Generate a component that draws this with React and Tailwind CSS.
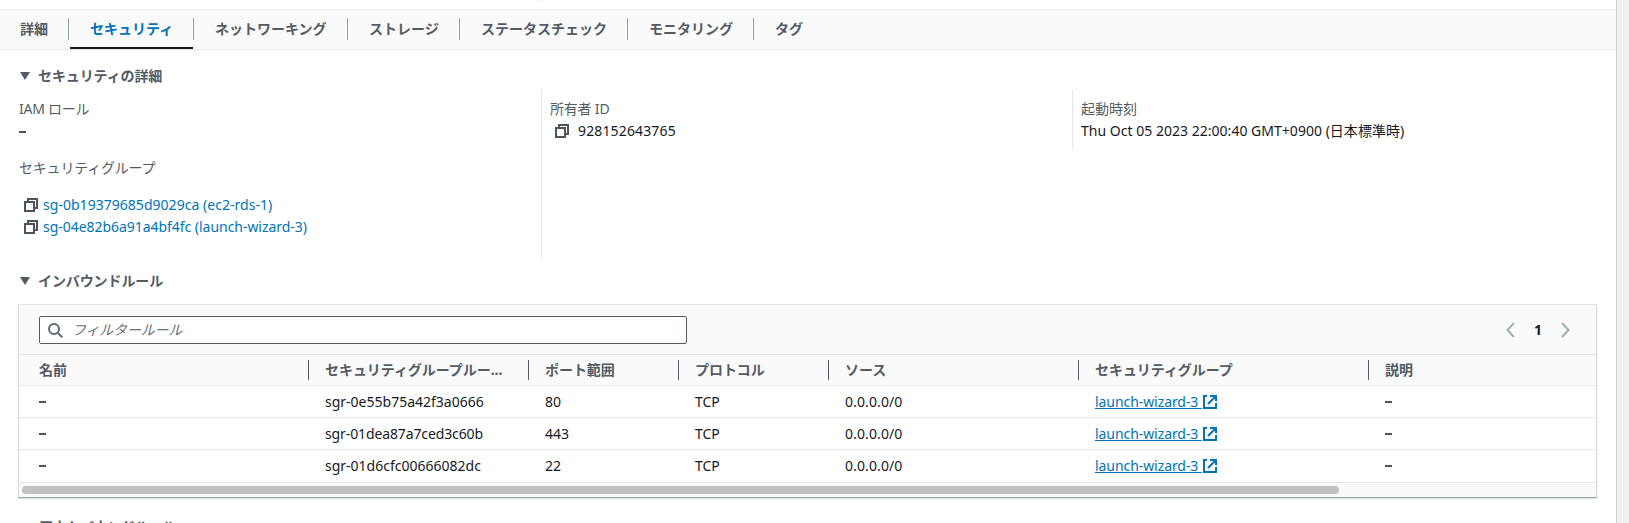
import React from "react";

const tabs = [
  { label: "詳細", box: "w-[49px] pl-0", sep: true },
  { label: "セキュリティ", box: "w-[125px] pl-[21px]", sep: true, active: true },
  { label: "ネットワーキング", box: "w-[154px] pl-[21px]", sep: true },
  { label: "ストレージ", box: "w-[112px] pl-[21px]", sep: true },
  { label: "ステータスチェック", box: "w-[168px] pl-[21px]", sep: true },
  { label: "モニタリング", box: "w-[126px] pl-[21px]", sep: true },
  { label: "タグ", box: "w-[70px] pl-[21px]" },
];

const columns = [
  "名前",
  "セキュリティグループルー...",
  "ポート範囲",
  "プロトコル",
  "ソース",
  "セキュリティグループ",
  "説明",
];

const rules = [
  { id: "sgr-0e55b75a42f3a0666", port: "80", spacing: "tracking-normal" },
  { id: "sgr-01dea87a7ced3c60b", port: "443", spacing: "tracking-[-0.12px]" },
  { id: "sgr-01d6cfc00666082dc", port: "22", spacing: "tracking-normal" },
];

const grid = "grid grid-cols-[290px_220px_150px_150px_250px_290px_1fr]";

function CopyIcon() {
  return (
    <svg className="block h-[14px] w-[14px] shrink-0" viewBox="0 0 14 14" fill="none" stroke="#4c555e" strokeWidth="2">
      <path d="M4 4V1h9v9h-3" />
      <path d="M1 4h9v9H1z" />
    </svg>
  );
}

function ExternalIcon() {
  return (
    <svg className="block h-[14px] w-[14px] shrink-0" viewBox="0 0 14 14" fill="none" stroke="#0073bb" strokeWidth="2">
      <path d="M4 1H1v12h12V8" />
      <path d="M7 1h6v5M13 1L5 9" />
    </svg>
  );
}

function Heading({ children }) {
  return (
    <h2 className="flex h-[22px] items-center pl-[20px] font-bold tracking-[-0.1px] text-[#545b64]">
      <svg className="mr-[8px] block h-[8px] w-[10px]" viewBox="0 0 10 8" fill="#545b64">
        <path d="M0 0h10L5 8z" />
      </svg>
      {children}
    </h2>
  );
}

function Dash() {
  return <span className="block h-[2px] w-[7px] bg-[#545358]" />;
}

export default function App() {
  return (
    <div className="flex h-[523px] w-[1629px] overflow-hidden bg-white font-['Noto_Sans','Noto_Sans_CJK_JP',sans-serif] text-[14px] leading-[22px] text-[#16191f]">
      <main className="w-[1616px] shrink-0">
        <div className="h-[9px] pl-[541px]">
          <div className="h-px w-px bg-[#d5dbdb]" />
        </div>
        <nav className="flex h-[41px] border-y border-[#e6e8e8] bg-[#fafafa] pl-[20px] font-bold text-[#545b64]">
          {tabs.map((t) => (
            <div key={t.label} className={"relative flex h-[39px] shrink-0 items-start pt-[8px] " + t.box}>
              <span className={"flex-1 whitespace-nowrap " + (t.active ? "text-[#0073bb]" : "")}>{t.label}</span>
              {t.sep && <span className="h-[22px] w-px bg-[#95a5a6]" />}
              {t.active && <span className="absolute bottom-0 left-[1px] h-[2px] w-[123px] bg-[#16191f]" />}
            </div>
          ))}
        </nav>

        <div className="pt-[15px]">
          <Heading>セキュリティの詳細</Heading>
        </div>

        <section className="mt-[3px] flex h-[169px] items-start">
          <div className="w-[541px] pl-[19px]">
            <div className="pt-[8px] tracking-[-0.25px] text-[#545b64]">IAM ロール</div>
            <div className="flex h-[24px] items-center"><Dash /></div>
            <div className="mt-[13px] tracking-[-0.2px] text-[#545b64]">セキュリティグループ</div>
            <div className="mt-[15px] flex h-[22px] items-center gap-[5px] pl-[5px] text-[#0073bb]">
              <CopyIcon />
              <a className="whitespace-nowrap tracking-[0.03px]">sg-0b19379685d9029ca (ec2-rds-1)</a>
            </div>
            <div className="flex h-[22px] items-center gap-[5px] pl-[5px] text-[#0073bb]">
              <CopyIcon />
              <a className="whitespace-nowrap tracking-[-0.04px]">sg-04e82b6a91a4bf4fc (launch-wizard-3)</a>
            </div>
          </div>
          <div className="h-[169px] w-[531px] border-l border-[#e6e8e8] pl-[8px] pt-[8px]">
            <div className="tracking-[-0.2px] text-[#545b64]">所有者 ID</div>
            <div className="flex items-center gap-[9px] pl-[5px]">
              <CopyIcon />
              <span className="tracking-[0.14px]">928152643765</span>
            </div>
          </div>
          <div className="h-[59px] flex-1 border-l border-[#e6e8e8] pl-[8px] pt-[8px]">
            <div className="text-[#545b64]">起動時刻</div>
            <div className="tracking-[0.02px]">Thu Oct 05 2023 22:00:40 GMT+0900 (日本標準時)</div>
          </div>
        </section>

        <div className="pt-[11px]">
          <Heading>インバウンドルール</Heading>
        </div>

        <section className="ml-[18px] mt-[12px] h-[194px] w-[1579px] border border-b-[#95a5a6] border-l-[#d5dbdb] border-r-[#d5dbdb] border-t-[#e6e8e8] bg-[#fafafa] shadow-[0_1px_1px_0_rgba(0,28,36,0.12)]">
          <div className="flex h-[50px] items-start justify-between border-b border-[#e6e8e8] pl-[20px] pr-[26px] pt-[11px]">
            <div className="flex h-[28px] w-[648px] items-center rounded-[2px] border border-[#545b64] bg-white pl-[8px] text-[#687078]">
              <svg className="mr-[9px] block h-[15px] w-[15px]" viewBox="0 0 15 15" fill="none" stroke="#5f6b73" strokeWidth="2">
                <circle cx="6" cy="6" r="5" />
                <path d="M9.7 9.7l4.6 4.6" />
              </svg>
              <span className="tracking-[-0.2px] italic">フィルタールール</span>
            </div>
            <div className="flex h-[28px] items-center">
              <svg className="block h-[16px] w-[9px]" viewBox="0 0 9 16" fill="none" stroke="#9fb0b0" strokeWidth="2">
                <path d="M8 1L1.5 8 8 15" />
              </svg>
              <span className="w-[46px] text-center font-bold">1</span>
              <svg className="block h-[16px] w-[9px]" viewBox="0 0 9 16" fill="none" stroke="#9fb0b0" strokeWidth="2">
                <path d="M1 1l6.500 7L1 15" />
              </svg>
            </div>
          </div>
          <div className={grid + " h-[31px] items-center border-b border-[#e6e8e8] font-bold text-[#545b64]"}>
            {columns.map((c, i) => (
              <div key={c} className={"flex items-center justify-between whitespace-nowrap " + (i === 0 ? "pl-[20px]" : "pl-[16px]")}>
                <span className="tracking-[-0.05px]">{c}</span>
                {i < 6 && <span className="h-[20px] w-px bg-[#545b64]" />}
              </div>
            ))}
          </div>
          <div className="bg-white">
            {rules.map((r, i) => (
              <div key={r.id} className={grid + " items-center border-b border-[#e6e8e8] " + (i === 2 ? "h-[33px]" : "h-[32px]")}>
                <div className="pl-[20px]"><Dash /></div>
                <div className={"pl-[16px] " + r.spacing}>{r.id}</div>
                <div className="pl-[16px]">{r.port}</div>
                <div className="pl-[16px]">TCP</div>
                <div className="pl-[16px] tracking-[0.1px]">0.0.0.0/0</div>
                <div className="flex items-center gap-[1px] pl-[16px] text-[#0073bb]">
                  <a className="whitespace-pre tracking-[-0.07px] underline">{"launch-wizard-3 "}</a>
                  <ExternalIcon />
                </div>
                <div className="pl-[16px]"><Dash /></div>
              </div>
            ))}
          </div>
          <div className="pl-[3px] pt-[3px]">
            <div className="h-[8px] w-[1317px] rounded-full bg-[#c1c1c1]" />
          </div>
        </section>
        <div className="mt-[18px] pl-[39px] font-bold tracking-[-0.3px] text-[#545b64]">アウトバウンドルール</div>
      </main>
      <aside className="flex-1 border-l border-[#cbd1d1] bg-[#f0f2f2]" />
    </div>
  );
}
